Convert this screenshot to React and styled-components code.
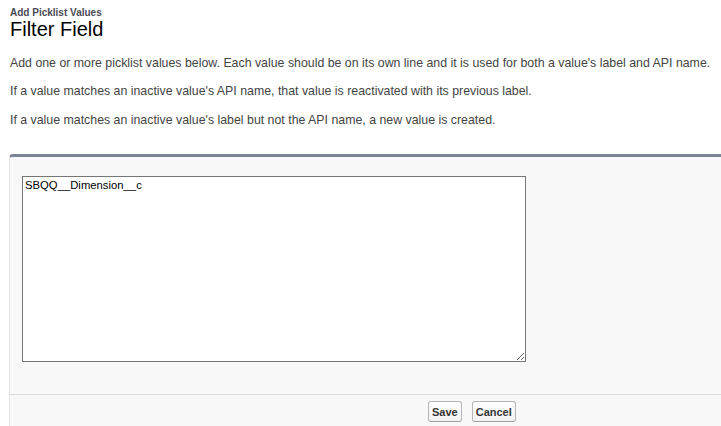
import React from "react";
import styled, { createGlobalStyle } from "styled-components";

const GlobalStyle = createGlobalStyle`
  html, body {
    margin: 0;
    padding: 0;
    overflow: hidden;
    background: #fff;
    font-family: Arial, "Liberation Sans", Helvetica, sans-serif;
  }
`;

const Page = styled.div`
  padding: 7px 0 0 10px;
`;

const PageType = styled.h2`
  margin: 0;
  font-size: 10px;
  line-height: 11px;
  font-weight: bold;
  color: #4a4a56;
`;

const PageTitle = styled.h1`
  margin: 0;
  font-size: 20px;
  line-height: 22px;
  font-weight: normal;
  color: #000;
`;

const Description = styled.div`
  margin-top: 14.5px;
  display: flex;
  flex-direction: column;
  gap: 12.5px;
`;

const Para = styled.p`
  margin: 0;
  font-size: 12.35px;
  line-height: 16px;
  color: #444;
  white-space: nowrap;
`;

const Panel = styled.div`
  margin: 26.5px 0 0 -1px;
  background: #f8f8f8;
  border-left: 1px solid #e3e3e3;
  border-top: 3px solid #7b8497;
  border-top-left-radius: 4px;
`;

const PanelBody = styled.div`
  padding: 19px 12px 32px;
`;

const ValuesInput = styled.textarea`
  display: block;
  box-sizing: border-box;
  width: 504px;
  height: 186px;
  margin: 0;
  padding: 2px;
  border: 1px solid #767676;
  border-radius: 0;
  background: #fff;
  font-family: Arial, "Liberation Sans", sans-serif;
  font-size: 11.3px;
  color: #000;
  outline: none;
`;

const Footer = styled.div`
  display: flex;
  gap: 10px;
  padding: 6px 0 20px 418px;
  border-top: 1px solid #dcdcdc;
`;

const Button = styled.button`
  height: 21px;
  padding: 0 3px;
  font-family: Arial, "Liberation Sans", sans-serif;
  font-size: 11px;
  font-weight: bold;
  color: #333;
  background: linear-gradient(#ffffff, #f1f1f1);
  border: 1px solid #b5b5b5;
  border-bottom-color: #9f9f9f;
  border-radius: 3px;
  cursor: pointer;
`;

export default function App() {
  return (
    <Page>
      <GlobalStyle />
      <PageType>Add Picklist Values</PageType>
      <PageTitle>Filter Field</PageTitle>
      <Description>
        <Para>
          Add one or more picklist values below. Each value should be on its own line and it is used for both a value's label and API name.
        </Para>
        <Para>
          If a value matches an inactive value's API name, that value is reactivated with its previous label.
        </Para>
        <Para>
          If a value matches an inactive value's label but not the API name, a new value is created.
        </Para>
      </Description>
      <Panel>
        <PanelBody>
          <ValuesInput defaultValue="SBQQ__Dimension__c" />
        </PanelBody>
        <Footer>
          <Button>Save</Button>
          <Button>Cancel</Button>
        </Footer>
      </Panel>
    </Page>
  );
}
